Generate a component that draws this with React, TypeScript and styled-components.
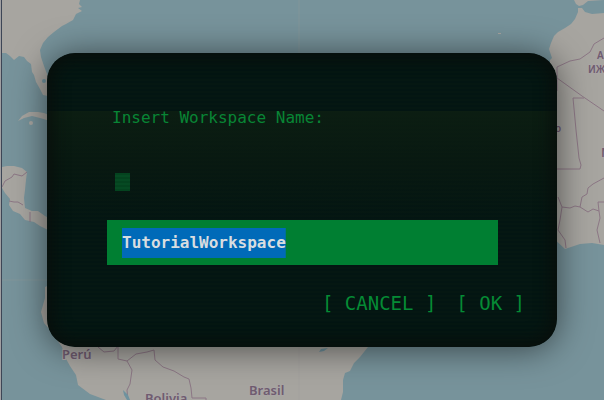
import React, { useEffect, useRef } from "react";
import styled, { createGlobalStyle } from "styled-components";

const GlobalStyle = createGlobalStyle`
  * { box-sizing: border-box; }
  body { margin: 0; background: #77939b; overflow: hidden; }
`;

const mono = `"DejaVu Sans Mono", "Liberation Mono", monospace`;

const Page = styled.main`
  position: relative;
  display: flex;
  align-items: center;
  min-height: 100vh;
  padding: 24px 47px;
`;

const MapBackdrop = styled.svg`
  position: absolute;
  inset: 0;
  width: 100%;
  height: 100%;
`;

const Dialog = styled.form`
  position: relative;
  flex: 1;
  display: flex;
  flex-direction: column;
  padding: 50px 32px 29px 60px;
  border-radius: 28px;
  overflow: hidden;
  font-family: ${mono};
  background: repeating-linear-gradient(#031512 0 2px, #051712 2px 4px);
  box-shadow: 0 2px 34px rgba(0, 0, 0, 0.55);

  &::before {
    content: "";
    position: absolute;
    inset: 58px 0 auto;
    height: 110px;
    background: linear-gradient(rgba(14, 32, 18, 0.75), rgba(12, 27, 16, 0.5) 50%, transparent);
  }

  &::after {
    content: "";
    position: absolute;
    inset: 0;
    border-radius: inherit;
    box-shadow: inset 0 0 16px 6px rgba(9, 12, 10, 0.8);
    pointer-events: none;
  }
`;

const Label = styled.label`
  position: relative;
  margin-left: 5px;
  font-size: 16px;
  line-height: 30px;
  color: #088535;
`;

const Cursor = styled.span`
  position: relative;
  width: 15px;
  height: 18px;
  margin: 40px 0 29px 8px;
  background: repeating-linear-gradient(#04431f 0 2px, #064a23 2px 4px);
`;

const NameInput = styled.input<{ $chars: number }>`
  position: relative;
  height: 45px;
  margin-right: 27px;
  padding: 0 15px;
  border: 0;
  border-radius: 0;
  outline: 0;
  background: linear-gradient(#006ab8, #006ab8) 15px center / ${(p) => p.$chars}ch 30px no-repeat #007f32;
  color: #d8dde0;
  caret-color: transparent;
  font-family: ${mono};
  font-size: 16px;
  font-weight: 700;
  line-height: 30px;

  &::selection {
    background: transparent;
    color: #d8dde0;
  }
`;

const Actions = styled.div`
  display: flex;
  justify-content: flex-end;
  gap: 20px;
  margin-top: 23px;
`;

const ActionButton = styled.button`
  position: relative;
  padding: 0;
  border: 0;
  background: none;
  color: #058b35;
  font-family: ${mono};
  font-size: 19px;
  line-height: 30px;
  cursor: pointer;
`;

const MapLabel = styled.text`
  font-family: "Noto Sans", sans-serif;
  font-size: 13px;
  font-weight: 600;
  fill: #6f5b70;
  stroke: #a9a5a4;
  stroke-width: 2px;
  paint-order: stroke;
`;

const SmallMapLabel = styled(MapLabel)`
  font-size: 10px;
`;

function WorldMap() {
  return (
    <MapBackdrop viewBox="0 0 604 400" preserveAspectRatio="xMidYMid slice" aria-hidden="true">
      <rect width="604" height="400" fill="#77939b" />
      <g fill="#a7a5a0">
        <path d="M2 0H80L79 4 82 7 78 8 82 11 76 14 73 20 66 24 62 26 54 32 48 37 43 43 40 50 41 57 44 66 47 74 52 90 48 96 43 95 40 89 36 82 34 75 32 72 31 64 27 61 24 57 19 56 14 60 10 56 6 53 2 53Z" />
        <path d="M18 121 22 116 29 112 38 112 44 113 56 118 50 121 40 118 32 116 24 118Z" />
        <circle cx="31" cy="123" r="2" />
        <path d="M2 167 7 166 14 166 22 168 27 172 26 180 25 190 24 198 25 208 32 211 38 211 45 216 60 224 60 235 46 229 40 226 34 222 25 220 20 214 13 211 9 205 10 199 5 193 2 188Z" />
        <path d="M60 280 45 287 45 298 41 312 44 323 50 330 62 347 65 357 70 366 76 375 78 385 90 394 106 400H341L343 392 343 380 345 373 350 371 354 363 360 357 368 347 380 330 200 270Z" />
        <path d="M574 0 576 4 579 6 583 5 588 1 604 0Z" />
        <path d="M578 8 582 8 585 12 592 14 604 13V245L592 243 580 244 565 249 550 235V60L552 58 549 49 551 43 554 36 558 32 565 28 571 24 575 19 578 12Z" />
        <path d="M498 33h3v1h-3z" />
      </g>
      <g fill="none" stroke="#8c7785" strokeWidth="1" strokeLinejoin="round">
        <path d="M2 187 5 181 12 177 14 174 22 176 27 172M9 201 14 202 18 202 23 205M30 212v10" />
        <path d="M98 347 104 352 114 351 118 346M118 346V359L127 361 136 354 147 352 154 350 155 360 163 367 174 371 184 377 189 379 191 388 192 398 206 398V402M127 361 132 370 130 384 127 390 128 402" />
        <path d="M557 91V67L570 61 580 59 590 52 594 44 604 38M557 78 582 96 604 111M584 98H573L576 130 579 158 581 165 580 169H557" />
        <path d="M604 178 593 184 588 188 587 194 582 197 580 207 575 206 570 208 562 207 558 197M580 207 588 212 593 209 599 211 598 202H604M599 211 600 218 597 230 600 243M562 207 560 220 558 230 565 240 566 248" />
      </g>
      <g fill="#6f929e">
        <path d="M123 390 128 395 130 400H127L124 395Z" />
        <path d="M319 352 321 349 328 348 324 351Z" />
        <circle cx="44" cy="81" r="2" />
      </g>
      <g stroke="#999" strokeOpacity=".3">
        <path d="M299 0V400M2 280H47" />
      </g>
      <MapLabel x="62" y="359">Perú</MapLabel>
      <MapLabel x="145" y="403">Bolivia</MapLabel>
      <MapLabel x="249" y="395">Brasil</MapLabel>
      <SmallMapLabel x="597" y="59">A</SmallMapLabel>
      <SmallMapLabel x="588" y="73">ИЖ</SmallMapLabel>
      <SmallMapLabel x="555" y="132">o</SmallMapLabel>
      <MapLabel x="601" y="157">M</MapLabel>
      <path d="M0 0H1V400H0Z" fill="#a09fa1" />
      <path d="M1 0H2V400H1Z" fill="#3d4656" />
    </MapBackdrop>
  );
}

const workspaceName = "TutorialWorkspace";

export default function App() {
  const nameRef = useRef<HTMLInputElement>(null);

  useEffect(() => {
    nameRef.current?.focus();
    nameRef.current?.select();
  }, []);

  return (
    <>
      <GlobalStyle />
      <Page>
        <WorldMap />
        <Dialog role="dialog" aria-labelledby="name-label" onSubmit={(e) => e.preventDefault()}>
          <Label id="name-label" htmlFor="workspace-name">Insert Workspace Name:</Label>
          <Cursor aria-hidden="true" />
          <NameInput
            ref={nameRef}
            id="workspace-name"
            type="text"
            $chars={workspaceName.length}
            defaultValue={workspaceName}
            spellCheck={false}
            autoComplete="off"
          />
          <Actions>
            <ActionButton type="button">[ CANCEL ]</ActionButton>
            <ActionButton type="submit">[ OK ]</ActionButton>
          </Actions>
        </Dialog>
      </Page>
    </>
  );
}
